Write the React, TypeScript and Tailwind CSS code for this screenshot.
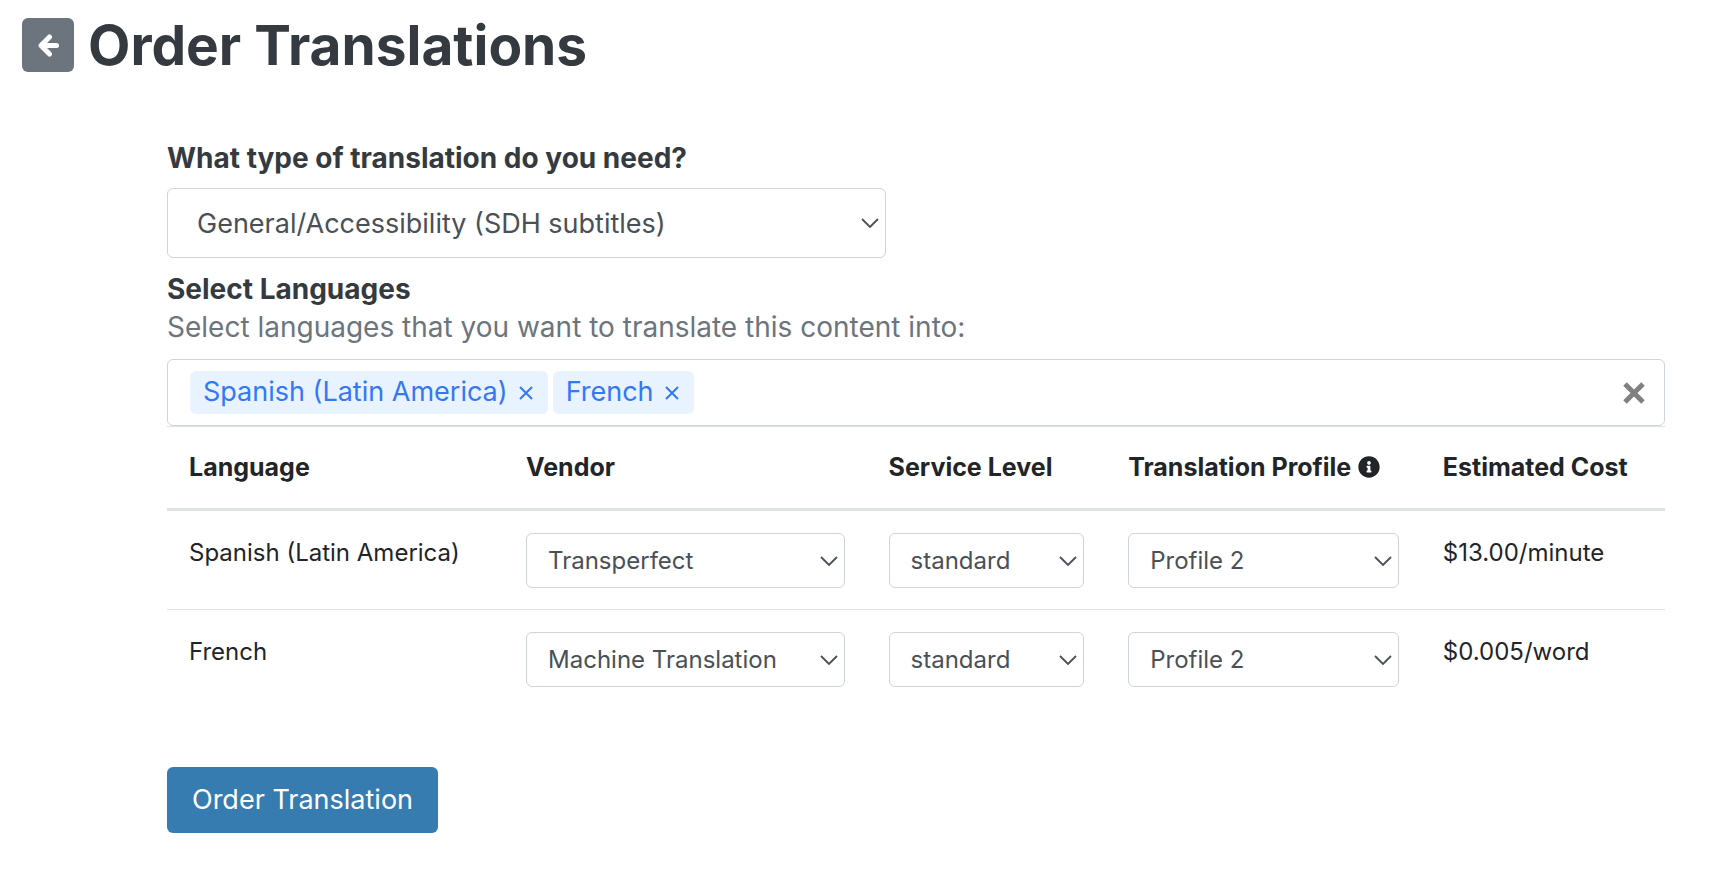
import { useState } from "react";
import type { SelectHTMLAttributes } from "react";
import { FaInfoCircle } from "react-icons/fa";

type Order = {
  language: string;
  vendor: string;
  level: string;
  profile: string;
  cost: string;
};

const ORDERS: Order[] = [
  { language: "Spanish (Latin America)", vendor: "Transperfect", level: "standard", profile: "Profile 2", cost: "$13.00/minute" },
  { language: "French", vendor: "Machine Translation", level: "standard", profile: "Profile 2", cost: "$0.005/word" },
];

type SelectProps = Omit<SelectHTMLAttributes<HTMLSelectElement>, "size"> & {
  options: string[];
  large?: boolean;
};

function Select({ options, large = false, ...props }: SelectProps) {
  return (
    <div className="relative w-full">
      <select
        {...props}
        className={
          large
            ? "block h-[70px] w-full appearance-none rounded-md border border-[#ced4da] bg-white pt-[3px] pr-12 pl-[29px] text-[27px] text-[#495057]"
            : "block h-[55px] w-full appearance-none rounded-md border border-[#ced4da] bg-white pt-px pr-10 pl-[21px] text-2xl text-[#495057]"
        }
      >
        {options.map((option) => (
          <option key={option}>{option}</option>
        ))}
      </select>
      <svg
        aria-hidden="true"
        viewBox="0 0 18 10"
        className="pointer-events-none absolute top-1/2 right-[7px] h-[10px] w-[18px] -translate-y-1/2"
        fill="none"
        stroke="#495057"
        strokeWidth="1.8"
      >
        <path d="M1 1l8 8 8-8" />
      </svg>
    </div>
  );
}

export default function App() {
  const [languages, setLanguages] = useState(ORDERS.map((order) => order.language));
  const rows = ORDERS.filter((order) => languages.includes(order.language));

  return (
    <main className="min-h-screen bg-white font-['Inter','Liberation_Sans',sans-serif] text-[#212529]">
      <header className="flex items-center gap-[14px] px-[22px] pt-[18px]">
        <button type="button" aria-label="Back" className="flex h-[54px] w-[52px] items-center justify-center rounded-md bg-[#6c757d] text-white">
          <svg
            viewBox="0 0 24 24"
            className="size-6"
            fill="none"
            stroke="currentColor"
            strokeWidth="5"
            strokeLinecap="round"
            strokeLinejoin="round"
            aria-hidden="true"
          >
            <path d="M13.5 4L5 12.5l8.5 8.5M6 12.5H20.5" />
          </svg>
        </button>
        <h1 className="text-[55px] leading-[54px] font-bold text-[#343a40]">Order Translations</h1>
      </header>

      <form className="pt-[66px] pr-[47px] pl-[167px]" onSubmit={(event) => event.preventDefault()}>
        <label htmlFor="type" className="block pb-[10px] text-[28px] leading-[40px] font-bold text-[#343a40]">
          What type of translation do you need?
        </label>
        <div className="w-[48%]">
          <Select id="type" large options={["General/Accessibility (SDH subtitles)"]} />
        </div>

        <h2 className="pt-3 text-[28px] leading-[38px] font-bold text-[#343a40]">Select Languages</h2>
        <p className="pb-[13px] text-[28px] leading-[38px] text-[#6c757d]">Select languages that you want to translate this content into:</p>

        <div className="flex h-[67px] items-center justify-between rounded-md border border-[#ced4da] pr-[18px] pl-[22px]">
          <ul className="flex gap-[5px]">
            {languages.map((language) => (
              <li key={language} className="flex h-[43px] items-center gap-[11px] rounded-md bg-[#e8f3ff] pr-[15px] pl-[13px] text-[27px] text-[#3478f6]">
                {language}
                <button
                  type="button"
                  aria-label={`Remove ${language}`}
                  onClick={() => setLanguages(languages.filter((item) => item !== language))}
                >
                  <svg viewBox="0 0 14 14" className="block size-[14px]" stroke="currentColor" strokeWidth="2" aria-hidden="true">
                    <path d="M1 1l12 12M13 1L1 13" />
                  </svg>
                </button>
              </li>
            ))}
          </ul>
          <button type="button" aria-label="Clear all languages" onClick={() => setLanguages([])}>
            <svg viewBox="0 0 24 24" className="block size-6" stroke="#808080" strokeWidth="5" aria-hidden="true">
              <path d="M3 3l18 18M21 3L3 21" />
            </svg>
          </button>
        </div>

        <table className="w-full table-fixed border-collapse border-t border-[#dee2e6] text-2xl">
          <thead>
            <tr className="h-[83px] border-b-[3px] border-[#dee2e6] text-left text-[25px] whitespace-nowrap">
              <th className="w-[22.5%] px-[22px]">Language</th>
              <th className="w-[24.2%] px-[22px]">Vendor</th>
              <th className="w-[16%] px-[22px]">Service Level</th>
              <th className="w-[21%] pl-[22px]">
                <span className="flex items-center gap-[7px]">
                  Translation Profile
                  <FaInfoCircle className="size-[22px] shrink-0" aria-hidden="true" />
                </span>
              </th>
              <th className="px-[22px]">Estimated Cost</th>
            </tr>
          </thead>
          <tbody>
            {rows.map((row) => (
              <tr key={row.language} className="h-[100px] border-b border-[#dee2e6] align-top last:border-b-0">
                <td className="px-[22px] pt-[22px] leading-[40px] whitespace-nowrap">{row.language}</td>
                <td className="px-[22px] pt-[22px]">
                  <Select aria-label={`Vendor for ${row.language}`} defaultValue={row.vendor} options={["Transperfect", "Machine Translation"]} />
                </td>
                <td className="px-[22px] pt-[22px]">
                  <Select aria-label={`Service level for ${row.language}`} options={[row.level]} />
                </td>
                <td className="px-[22px] pt-[22px]">
                  <Select aria-label={`Translation profile for ${row.language}`} options={[row.profile]} />
                </td>
                <td className="px-[22px] pt-[22px] leading-[40px] whitespace-nowrap">{row.cost}</td>
              </tr>
            ))}
          </tbody>
        </table>

        <button type="submit" className="mt-[57px] h-[66px] rounded-md bg-[#377cb1] px-[25px] pt-[2px] text-[27px] text-white">
          Order Translation
        </button>
      </form>
    </main>
  );
}
